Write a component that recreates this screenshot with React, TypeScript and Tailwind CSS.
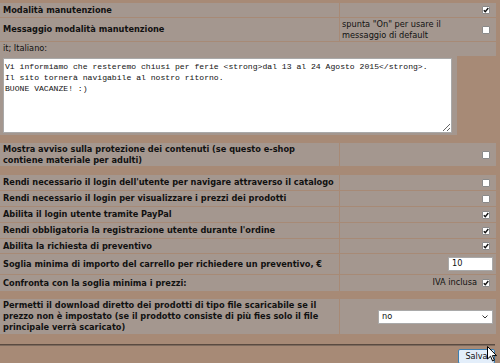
import React from "react";

const Check = ({ checked }: { checked?: boolean }) => (
  <span className="inline-flex h-[8px] w-[8px] items-center justify-center rounded-[1px] border border-[#8a8a8a] bg-white">
    {checked && (
      <svg width="6" height="6" viewBox="0 0 6 6">
        <path d="M0.8 3.2 L2.3 4.8 L5.3 1" stroke="#111" strokeWidth="1.4" fill="none" />
      </svg>
    )}
  </span>
);

const Row = ({
  label,
  right,
  h,
  checked,
}: {
  label: React.ReactNode;
  right?: React.ReactNode;
  h: string;
  checked?: boolean;
}) => (
  <div className={`flex gap-px ${h}`}>
    <div className="flex w-[339px] items-center bg-[#a4978f] pl-[3px] font-bold leading-[11px] text-[#111]">
      {label}
    </div>
    <div className="flex flex-1 items-center justify-end bg-[#a4978f] pr-[6px]">
      {right ?? <Check checked={checked} />}
    </div>
  </div>
);

export default function App() {
  return (
    <div
      className="relative h-[363px] w-[500px] overflow-hidden bg-[#a78a76] pt-[3px] text-[9.15px] text-[#111]"
      style={{ fontFamily: '"DejaVu Sans Condensed", "DejaVu Sans", sans-serif', fontStretch: "condensed" }}
    >
      <div className="flex w-[496px] flex-col gap-px">
        <Row h="h-[14px]" label="Modalità manutenzione" checked />
        <div className="flex h-[23px] gap-px">
          <div className="flex w-[339px] items-center bg-[#a4978f] pl-[3px] font-bold">
            Messaggio modalità manutenzione
          </div>
          <div className="flex flex-1 items-center justify-between bg-[#a4978f] pl-[2px] pr-[6px]">
            <span className="leading-[11px]">
              spunta "On" per usare il
              <br />
              messaggio di default
            </span>
            <Check />
          </div>
        </div>
        <div className="flex h-[14px] items-center bg-[#a4978f] pl-[3px]">it; Italiano:</div>
      </div>
      <div className="w-[457px] bg-[#a4978f] pb-[2px] pl-[3px] pr-[5px] pt-[2px]">
        <textarea
          className="block h-[75px] w-[449px] border border-[#a9a9a9] bg-white px-[1px] py-[2px] text-[8.1px] leading-[11px] text-[#111]"
          style={{ fontFamily: '"Liberation Mono", monospace' }}
          defaultValue={
            "Vi informiamo che resteremo chiusi per ferie <strong>dal 13 al 24 Agosto 2015</strong>.\nIl sito tornerà navigabile al nostro ritorno.\nBUONE VACANZE! :)"
          }
        />
      </div>

      <div className="mt-[8px] flex w-[496px] flex-col gap-px">
        <Row
          h="h-[23px]"
          label={
            <span>
              Mostra avviso sulla protezione dei contenuti (se questo e-shop
              <br />
              contiene materiale per adulti)
            </span>
          }
        />
      </div>

      <div className="mt-[9px] flex w-[496px] flex-col gap-px">
        <Row h="h-[15px]" label="Rendi necessario il login dell'utente per navigare attraverso il catalogo" />
        <Row h="h-[15px]" label="Rendi necessario il login per visualizzare i prezzi dei prodotti" />
        <Row h="h-[15px]" label="Abilita il login utente tramite PayPal" checked />
        <Row h="h-[15px]" label="Rendi obbligatoria la registrazione utente durante l'ordine" checked />
        <Row h="h-[14px]" label="Abilita la richiesta di preventivo" checked />
        <Row
          h="h-[20px]"
          label="Soglia minima di importo del carrello per richiedere un preventivo, €"
          right={
            <div className="-mr-[3px] flex h-[14px] w-[45px] items-center border border-[#a9a9a9] bg-white pl-[3px] font-normal">
              10
            </div>
          }
        />
        <Row
          h="h-[16px]"
          label="Confronta con la soglia minima i prezzi:"
          right={
            <span className="flex items-center gap-[5px]">
              <span>IVA inclusa</span>
              <Check checked />
            </span>
          }
        />
      </div>

      <div className="mt-[8px] flex w-[496px] flex-col gap-px">
        <Row
          h="h-[35px]"
          label={
            <span>
              Permetti il download diretto dei prodotti di tipo file scaricabile se il
              <br />
              prezzo non è impostato (se il prodotto consiste di più fies solo il file
              <br />
              principale verrà scaricato)
            </span>
          }
          right={
            <div className="-mr-[3px] flex h-[14px] w-[115px] items-center justify-between border border-[#a9a9a9] bg-white pl-[3px] pr-[4px]">
              <span>no</span>
              <svg width="6" height="4" viewBox="0 0 6 4">
                <path d="M0.5 0.5 L3 3 L5.5 0.5" stroke="#333" strokeWidth="1" fill="none" />
              </svg>
            </div>
          }
        />
      </div>

      <div className="mt-[10px] h-[2px] w-[495px] border-t border-b border-t-[#5a4a40] border-b-[#7d6a5d]" />

      <div className="flex w-[495px] justify-end pt-[3px]">
        <button className="h-[15px] w-[37px] rounded-[2px] border border-[#3c7fb1] bg-[#e3eefa] text-[9px] leading-[13px] text-[#111]">
          Salva
        </button>
      </div>

      <svg className="absolute left-[487px] top-[346px]" width="11" height="17" viewBox="0 0 11 17">
        <path d="M0.5 0.5 L0.5 13 L3.5 10.2 L5.6 15 L7.4 14.2 L5.4 9.6 L9.5 9.6 Z" fill="#fff" stroke="#000" strokeWidth="1" />
      </svg>
    </div>
  );
}
